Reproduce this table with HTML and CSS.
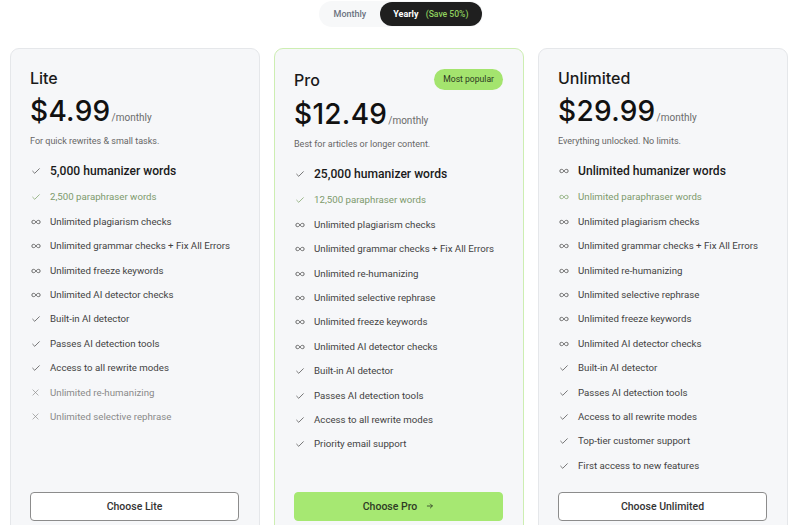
FILE: index.html
```html
<!DOCTYPE html>
<html>
<head>
<meta charset="utf-8">
<link rel="stylesheet" href="styles.css">
</head>
<body>
<svg width="0" height="0" class="defs">
  <defs>
    <symbol id="i-check" viewBox="0 0 24 24"><path d="M4 12.5l5 5L20 6.5" fill="none" stroke="currentColor" stroke-width="1.8" stroke-linecap="round" stroke-linejoin="round"/></symbol>
    <symbol id="i-inf" viewBox="0 0 24 12"><path d="M12 6C10 3.2 8.2 2 6 2a4 4 0 0 0 0 8c2.2 0 4-1.2 6-4s3.8-4 6-4a4 4 0 0 1 0 8c-2.2 0-4-1.2-6-4z" fill="none" stroke="currentColor" stroke-width="1.9"/></symbol>
    <symbol id="i-x" viewBox="0 0 24 24"><path d="M5 5l14 14M19 5L5 19" fill="none" stroke="currentColor" stroke-width="1.8" stroke-linecap="round"/></symbol>
    <symbol id="i-arrow" viewBox="0 0 24 24"><path d="M4 12h15M13 6l6 6-6 6" fill="none" stroke="currentColor" stroke-width="2.4" stroke-linecap="round" stroke-linejoin="round"/></symbol>
  </defs>
</svg>

<div class="toggle-wrap">
  <div class="toggle">
    <span class="opt">Monthly</span>
    <span class="opt active">Yearly <em class="save">(Save 50%)</em></span>
  </div>
</div>

<div class="plans">
  <div class="card">
    <div class="head"><h2 class="name">Lite</h2></div>
    <div class="price"><span class="amt">$4.99</span><span class="per">/monthly</span></div>
    <p class="desc">For quick rewrites &amp; small tasks.</p>
    <ul class="features">
      <li class="lead"><svg class="ic ck"><use href="#i-check"/></svg>5,000 humanizer words</li>
      <li class="sub"><svg class="ic ck"><use href="#i-check"/></svg>2,500 paraphraser words</li>
      <li><svg class="ic inf"><use href="#i-inf"/></svg>Unlimited plagiarism checks</li>
      <li><svg class="ic inf"><use href="#i-inf"/></svg>Unlimited grammar checks + Fix All Errors</li>
      <li><svg class="ic inf"><use href="#i-inf"/></svg>Unlimited freeze keywords</li>
      <li><svg class="ic inf"><use href="#i-inf"/></svg>Unlimited AI detector checks</li>
      <li><svg class="ic ck"><use href="#i-check"/></svg>Built-in AI detector</li>
      <li><svg class="ic ck"><use href="#i-check"/></svg>Passes AI detection tools</li>
      <li><svg class="ic ck"><use href="#i-check"/></svg>Access to all rewrite modes</li>
      <li class="off"><svg class="ic x"><use href="#i-x"/></svg>Unlimited re-humanizing</li>
      <li class="off"><svg class="ic x"><use href="#i-x"/></svg>Unlimited selective rephrase</li>
    </ul>
    <button class="btn">Choose Lite</button>
  </div>

  <div class="card pro">
    <div class="head"><h2 class="name">Pro</h2><span class="badge">Most popular</span></div>
    <div class="price"><span class="amt">$12.49</span><span class="per">/monthly</span></div>
    <p class="desc">Best for articles or longer content.</p>
    <ul class="features">
      <li class="lead"><svg class="ic ck"><use href="#i-check"/></svg>25,000 humanizer words</li>
      <li class="sub"><svg class="ic ck"><use href="#i-check"/></svg>12,500 paraphraser words</li>
      <li><svg class="ic inf"><use href="#i-inf"/></svg>Unlimited plagiarism checks</li>
      <li><svg class="ic inf"><use href="#i-inf"/></svg>Unlimited grammar checks + Fix All Errors</li>
      <li><svg class="ic inf"><use href="#i-inf"/></svg>Unlimited re-humanizing</li>
      <li><svg class="ic inf"><use href="#i-inf"/></svg>Unlimited selective rephrase</li>
      <li><svg class="ic inf"><use href="#i-inf"/></svg>Unlimited freeze keywords</li>
      <li><svg class="ic inf"><use href="#i-inf"/></svg>Unlimited AI detector checks</li>
      <li><svg class="ic ck"><use href="#i-check"/></svg>Built-in AI detector</li>
      <li><svg class="ic ck"><use href="#i-check"/></svg>Passes AI detection tools</li>
      <li><svg class="ic ck"><use href="#i-check"/></svg>Access to all rewrite modes</li>
      <li><svg class="ic ck"><use href="#i-check"/></svg>Priority email support</li>
    </ul>
    <button class="btn primary">Choose Pro <svg class="arrow"><use href="#i-arrow"/></svg></button>
  </div>

  <div class="card">
    <div class="head"><h2 class="name">Unlimited</h2></div>
    <div class="price"><span class="amt">$29.99</span><span class="per">/monthly</span></div>
    <p class="desc">Everything unlocked. No limits.</p>
    <ul class="features">
      <li class="lead"><svg class="ic inf"><use href="#i-inf"/></svg>Unlimited humanizer words</li>
      <li class="sub"><svg class="ic inf"><use href="#i-inf"/></svg>Unlimited paraphraser words</li>
      <li><svg class="ic inf"><use href="#i-inf"/></svg>Unlimited plagiarism checks</li>
      <li><svg class="ic inf"><use href="#i-inf"/></svg>Unlimited grammar checks + Fix All Errors</li>
      <li><svg class="ic inf"><use href="#i-inf"/></svg>Unlimited re-humanizing</li>
      <li><svg class="ic inf"><use href="#i-inf"/></svg>Unlimited selective rephrase</li>
      <li><svg class="ic inf"><use href="#i-inf"/></svg>Unlimited freeze keywords</li>
      <li><svg class="ic inf"><use href="#i-inf"/></svg>Unlimited AI detector checks</li>
      <li><svg class="ic ck"><use href="#i-check"/></svg>Built-in AI detector</li>
      <li><svg class="ic ck"><use href="#i-check"/></svg>Passes AI detection tools</li>
      <li><svg class="ic ck"><use href="#i-check"/></svg>Access to all rewrite modes</li>
      <li><svg class="ic ck"><use href="#i-check"/></svg>Top-tier customer support</li>
      <li><svg class="ic ck"><use href="#i-check"/></svg>First access to new features</li>
    </ul>
    <button class="btn">Choose Unlimited</button>
  </div>
</div>
</body>
</html>
```

FILE: styles.css
```css
* { box-sizing: border-box; }
html, body { margin: 0; padding: 0; background: #ffffff; }
body {
  font-family: Roboto, "Liberation Sans", sans-serif;
  color: #222;
  overflow: hidden;
  height: 525px;
}
.defs { position: absolute; width: 0; height: 0; overflow: hidden; }

.toggle-wrap { display: flex; justify-content: center; padding-top: 1px; padding-left: 2px; }
.toggle {
  display: flex;
  align-items: center;
  background: #f7f8f9;
  border-radius: 14px;
  padding: 1px 1px 1px 0;
  height: 26px;
}
.opt {
  font-size: 9px;
  font-weight: 500;
  color: #6b7280;
  padding: 0 14px 0 15px;
  height: 24px;
  line-height: 24px;
  border-radius: 12px;
}
.opt.active {
  background: #1f1f1f;
  color: #fff;
  font-weight: 700;
  padding: 0 14px 0 13px;
}
.save { font-style: normal; color: #8fd15e; font-weight: 500; font-size: 8.6px; margin-left: 5px; }

.plans {
  display: grid;
  grid-template-columns: repeat(3, 1fr);
  gap: 14px;
  padding: 0 12px 0 10px;
  margin-top: 21px;
}
.card {
  background: #f6f7f9;
  border: 1px solid #e5e7ea;
  border-radius: 9px;
  padding: 19px 20px 20px 19px;
  display: flex;
  flex-direction: column;
}
.card.pro { border-color: #cdeeb2; }

.head { display: flex; align-items: center; justify-content: space-between; min-height: 20px; }
.name {
  margin: 0;
  font-family: Inter, sans-serif;
  font-weight: 500;
  font-size: 16px;
  line-height: 20px;
  color: #1a1a1a;
}
.badge {
  background: #a4e46e;
  color: #2b3822;
  font-size: 8.6px;
  font-weight: 400;
  height: 21px;
  line-height: 21px;
  padding: 0 9px;
  border-radius: 11px;
}
.pro .head { min-height: 23px; }

.price { margin-top: 6px; display: flex; align-items: baseline; }
.amt {
  font-family: Inter, sans-serif;
  font-weight: 500;
  font-size: 28px;
  line-height: 34px;
  color: #111;
  letter-spacing: 0.3px;
}
.per { font-size: 10px; color: #6b6b6b; margin-left: 1px; }

.desc { margin: 7px 0 0; font-size: 9px; line-height: 12px; color: #666; }

.features { list-style: none; margin: 16px 0 19px; padding: 0; display: flex; flex-direction: column; gap: 10.4px; }
.features li {
  display: flex;
  align-items: center;
  white-space: nowrap;
  font-size: 9.7px;
  line-height: 14px;
  color: #424242;
}
.features li.lead { font-size: 12.1px; font-weight: 500; color: #1a1a1a; line-height: 16px; margin-bottom: 1px; }
.features li.sub { color: #7d9a6c; }
.features li.sub .ic { color: #7da368; }
.features li.off { color: #8a8a8a; }
.ic { flex: none; width: 10px; height: 10px; margin: 0 9px 0 1px; color: #4a4a4a; }
.ic.inf { height: 6px; }
.ic.x { width: 9px; height: 9px; color: #8a8a8a; margin-right: 10px; }

.btn {
  margin-top: auto;
  height: 29px;
  width: 100%;
  border: 1px solid #8c8c8c;
  border-radius: 4px;
  background: #fff;
  font-family: Roboto, sans-serif;
  font-size: 10.5px;
  font-weight: 500;
  color: #333;
  cursor: pointer;
  display: flex;
  align-items: center;
  justify-content: center;
}
.btn.primary { background: #a6e872; border-color: #a6e872; color: #2e3b25; }
.arrow { width: 8px; height: 8px; margin-left: 9px; }
```
